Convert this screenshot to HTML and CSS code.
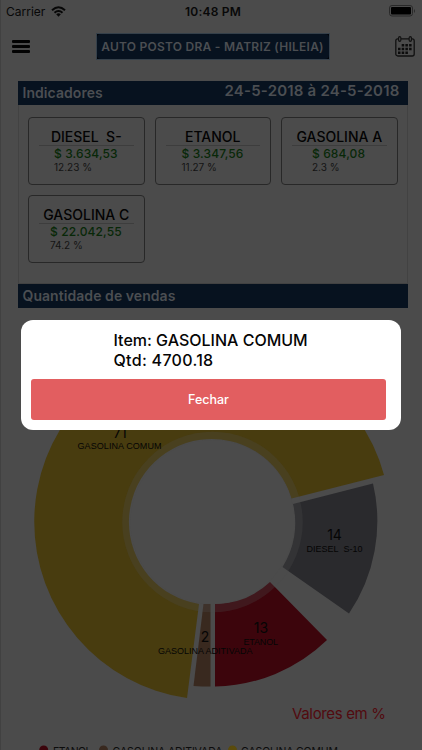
FILE: index.html
```html
<!DOCTYPE html>
<html lang="pt-BR">
<head>
<meta charset="utf-8">
<title>Indicadores</title>
<link rel="stylesheet" href="styles.css">
</head>
<body>
<div class="screen">
  <div class="status">
    <div class="carrier"><span>Carrier</span>
      <svg width="15" height="11" viewBox="0 0 15 11" fill="none" stroke="#070707" stroke-width="2"><path d="M1 4.200Q7.500-1.800 14 4.200"/><path d="M3.500 6.700Q7.500 3.200 11.500 6.700"/><path d="M5.200 8.300Q7.500 6.400 9.800 8.300L7.500 10.800z" fill="#070707" stroke="none"/></svg>
    </div>
    <b class="clock">10:48 PM</b>
    <svg class="battery" width="27" height="12" viewBox="0 0 27 12"><rect x=".5" y=".5" width="23" height="10.500" rx="2.500" fill="none" stroke="#292929"/><rect x="2" y="2" width="20" height="7.500" rx="1" fill="#000"/><path d="M25 4v4q2-2 0-4" fill="#292929"/></svg>
  </div>
  <header class="nav">
    <div class="menu"><i></i><i></i><i></i></div>
    <div class="select"><span>AUTO POSTO DRA - MATRIZ (HILEIA)</span></div>
    <svg class="calendar" width="20" height="21" viewBox="0 0 20 21"><rect x=".8" y="2.800" width="18.400" height="17.200" rx="2" fill="none" stroke="#111" stroke-width="1.300"/><path d="M4.700 1.800v2.500M15.300 1.800v2.500" stroke="#111" stroke-width="3.400" stroke-linecap="round"/><path d="M4.700 1.500v3M15.300 1.500v3" stroke="#484848" stroke-width="1.200"/><path d="M6.700 9.300h10M3 13h14M3 16.700h10" stroke="#0c0c0c" stroke-width="2.500" stroke-dasharray="2.500 1.200"/></svg>
  </header>
  <main class="panel">
    <div class="bar"><span class="bar-title">Indicadores</span><span class="dates">24-5-2018 à 24-5-2018</span></div>
    <div class="cards">
      <div class="card"><h3>DIESEL&nbsp; S-</h3><div class="vals v1"><p>$ 3.634,53</p><small>12.23 %</small></div></div>
      <div class="card"><h3>ETANOL</h3><div class="vals v2"><p>$ 3.347,56</p><small>11.27 %</small></div></div>
      <div class="card"><h3>GASOLINA A</h3><div class="vals v3"><p>$ 684,08</p><small>2.3 %</small></div></div>
      <div class="card"><h3>GASOLINA C</h3><div class="vals v4"><p>$ 22.042,55</p><small>74.2 %</small></div></div>
    </div>
    <div class="bar"><span class="bar-title">Quantidade de vendas</span></div>
  </main>
  <svg class="chart" width="422" height="442" viewBox="0 308 422 442">
    <g class="slices">
      <path fill="#483c0f" d="M187 698A178 178 0 1 1 384 475L291.500 498.500A83 83 0 1 0 199 604Z"/>
      <path fill="#2a2a2d" d="M373 483.500A165 165 0 0 1 349 613.500L282.500 567A82 82 0 0 0 293 504Z"/>
      <path fill="#3c050c" d="M327 640A165 165 0 0 1 215 686.500V604A82 82 0 0 0 270 582Z"/>
      <path fill="#39291f" d="M210.500 686.500Q202 686.500 193.500 686L203.500 604H210.500Z"/>
    </g>
    <circle cx="212.500" cy="522" r="86" fill="none" stroke="#4b4b4b" stroke-opacity=".28" stroke-width="8.500"/>
    <circle cx="212.500" cy="522" r="82" fill="#4b4b4b"/>
    <g class="num"><text x="120" y="438">71</text><text x="334.500" y="539.500">14</text><text x="261" y="632.500">13</text><text x="205" y="642">2</text></g>
    <g class="lab"><text x="77.500" y="449.300" textLength="84">GASOLINA COMUM</text><text x="306.500" y="551.500" textLength="56">DIESEL&#160; S-10</text><text x="243.500" y="644.500" textLength="34.500">ETANOL</text><text x="158" y="654.300" textLength="94.500">GASOLINA ADITIVADA</text></g>
    <text class="unit" x="292" y="718.500" textLength="94">Valores em %</text>
    <g class="legend"><circle cx="43.700" cy="750" r="4.500" fill="#3c050c"/><text x="53" y="754.500" textLength="38.500">ETANOL</text><circle cx="103.500" cy="750" r="4.500" fill="#39291f"/><text x="112.500" y="754.500" textLength="110">GASOLINA ADITIVADA</text><circle cx="232.500" cy="750" r="4.500" fill="#5a4b0c"/><text x="241" y="754.500" textLength="97">GASOLINA COMUM</text></g>
  </svg>
</div>
<div class="modal">
  <div class="message">Item: GASOLINA COMUM<br><span>Qtd: 4700.18</span></div>
  <button class="close">Fechar</button>
</div>
</body>
</html>
```
FILE: styles.css
```css
* { box-sizing: border-box; }
body { margin: 0; background: #4b4b4b; font-family: Inter, "Liberation Sans", sans-serif; overflow: hidden; }
.screen { width: 422px; height: 750px; overflow: hidden; border-left: 1px solid #414141; }
.status { height: 22px; display: grid; grid-template-columns: 1fr auto 1fr; align-items: center; padding: 0 6px 0 5px; font-size: 12px; color: #080808; }
.carrier { display: flex; align-items: center; gap: 6px; letter-spacing: 0; }
.clock { font-weight: 600; letter-spacing: .2px; padding-left: 4px; }
.battery { justify-self: end; }
.nav { height: 59px; display: flex; justify-content: space-between; align-items: flex-start; padding: 11px 7px 0 11px; }
.menu { width: 18px; padding-top: 7px; display: grid; gap: 2.500px; }
.menu i { height: 2.700px; background: #030303; border-radius: 1px; }
.select { width: 234px; height: 27px; margin-left: 0; background: #020509; border: 1px solid #35404a; }
.select span { display: block; height: 25px; border-radius: 4px; background: #07121f; color: #4b4e52; font-size: 12px; font-weight: 600; line-height: 26px; text-align: center; white-space: nowrap; letter-spacing: .25px; }
.calendar { margin-top: 3px; }
.panel { width: 390px; margin-left: 16.500px; }
.bar { height: 23.500px; padding: 0 8px 0 5px; background: #07121f; color: #4b4e52; font-size: 14px; font-weight: 600; line-height: 24px; display: flex; justify-content: space-between; }
.bar-title { letter-spacing: .06px; }
.dates { font-size: 15px; line-height: 19px; letter-spacing: .2px; }
.cards { height: 179.500px; padding: 12px 9px 0 9.500px; border: 1px solid #424242; border-top: 0; display: grid; grid-template-columns: repeat(3, 116.500px); grid-auto-rows: 68px; column-gap: 10px; row-gap: 10px; }
.card { border: 1px solid #282828; border-radius: 4px; padding: 11px 10px 0; }
.card h3 { margin: 0; height: 17px; border-bottom: 1px solid #3d3d3d; color: #030303; font-size: 14px; font-weight: 500; line-height: 16px; text-align: center; white-space: nowrap; }
.vals { white-space: nowrap; }
.v1 { padding-left: 15px; }
.v2 { padding-left: 16px; }
.v3 { padding-left: 20px; }
.v4 { padding-left: 11px; }
.vals p { margin: 0; color: #082808; font-size: 12px; font-weight: 500; line-height: 16px; letter-spacing: .12px; }
.vals small { display: block; color: #141414; font-size: 10px; line-height: 11px; }
.chart { display: block; margin-left: -1px; }
.num { font-size: 14px; text-anchor: middle; fill: #050505; }
.lab { font: 9px "Liberation Sans", sans-serif; fill: #050505; }
.unit { font-size: 15px; fill: #520a0f; }
.legend { font-size: 10.500px; }
.legend text { fill: #0c0c0c; }
.modal { position: absolute; left: 21px; top: 320px; width: 380px; height: 110px; background: #fff; border-radius: 12px; padding: 10px 15px 10px 10px; }
.message { height: 49px; padding-left: 82.500px; color: #050505; font-size: 16px; font-weight: 500; line-height: 20px; white-space: nowrap; }
.message span { letter-spacing: .3px; }
.close { display: block; width: 355px; height: 41px; border: 0; border-radius: 3px; background: #e25e60; color: #fff; font: 500 12.500px/1 Inter, sans-serif; padding-top: 3px; }
```
